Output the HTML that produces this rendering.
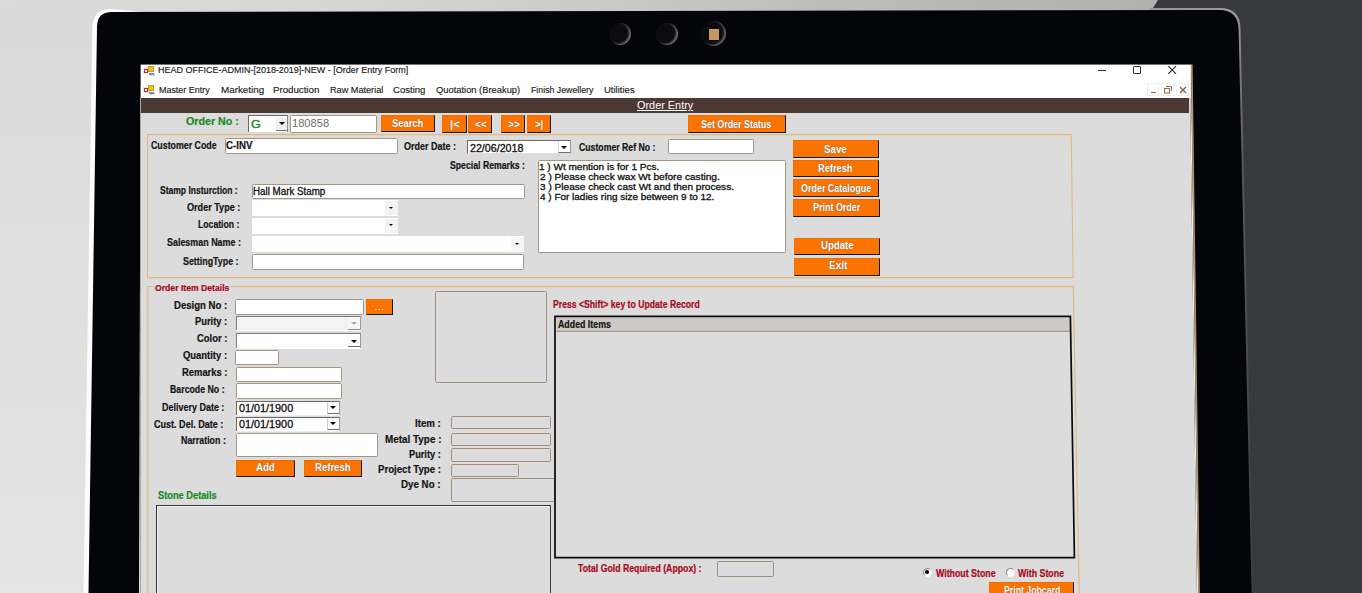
<!DOCTYPE html><html><head><meta charset="utf-8"><style>
*{margin:0;padding:0;box-sizing:border-box}
html,body{width:1362px;height:593px;overflow:hidden;background:#dcdcdc;font-family:"Liberation Sans",sans-serif}
.a{position:absolute}
.t{position:absolute;white-space:nowrap;line-height:1;transform-origin:0 0}

</style></head><body>
<svg class="a" style="left:0;top:0" width="1362" height="593">
 <defs><linearGradient id="bg" x1="0" y1="0" x2="0" y2="1"><stop offset="0" stop-color="#dadada"/><stop offset="1" stop-color="#e4e4e4"/></linearGradient></defs>
 <rect x="0" y="0" width="1362" height="593" fill="url(#bg)"/>
 <linearGradient id="tg" x1="0" y1="0" x2="1" y2="0"><stop offset="0" stop-color="#dbdbdb"/><stop offset="0.26" stop-color="#d7d7d5"/><stop offset="0.52" stop-color="#cacac6"/><stop offset="0.7" stop-color="#bebdb9"/><stop offset="1" stop-color="#b2b0ac"/></linearGradient>
 <rect x="0" y="0" width="1160" height="14" fill="url(#tg)"/>
 <path d="M1158 0 H1362 V593 H1150 V8 H1153 Z" fill="#38393c"/>
 <path d="M83.5 593 L92.3 28 Q92.5 8.6 112 9 L145 12.2 L112 12.5 Q97.5 12.5 97.3 27 L89 593 Z" fill="#fcfcfc"/>
 <linearGradient id="rg" x1="0" y1="0" x2="0" y2="1"><stop offset="0" stop-color="#9a9898"/><stop offset="0.25" stop-color="#5a5a5a"/><stop offset="1" stop-color="#3b3c3f"/></linearGradient>
 <path d="M1150 8 L1220 8 Q1240.5 8 1240.5 29 L1253.4 593 L1244 593 Z" fill="url(#rg)"/>
 <path d="M88.5 593 L97 27 Q97 12 112 12 L1218.6 10 Q1238.6 10 1238.6 30 L1251.6 593 Z" fill="#04040b"/>
 <path d="M140.6 64.5 L1189.7 64.5 L1196.9 593 L139 593 Z" fill="#dcdcdc"/>
</svg>

<div class="a" style="left:608.5px;top:22.8px;width:22px;height:22px;border-radius:50%;background:#0b0b10;box-shadow:inset -2px -1px 2px rgba(210,210,210,.5)"></div>
<div class="a" style="left:656px;top:22.5px;width:22px;height:22px;border-radius:50%;background:#0b0b10;box-shadow:inset -2px -1px 2px rgba(210,210,210,.5)"></div>
<div class="a" style="left:700.6px;top:20.9px;width:25px;height:25px;border-radius:50%;background:#0b0b10;box-shadow:inset -2px -1px 2px rgba(210,210,210,.45)"></div>
<div class="a" style="left:708.5px;top:28.9px;width:10px;height:11px;background:#c29a5e"></div>

<div class="a" style="left:140.60px;top:64.50px;width:1050.10px;height:33.50px;background:#fff"></div>
<div class="a" style="left:140.60px;top:98.00px;width:1048.60px;height:14.70px;background:#4b3933"></div>
<div class="a" style="left:139.80px;top:98.00px;width:1.40px;height:502.00px;background:#a8a8a8"></div>
<div class="a" style="left:143.5px;top:65.5px;width:11px;height:10px"><div class="a" style="left:0;top:3px;width:4.5px;height:4.5px;background:#fff;border:1px solid #b83030;box-shadow:0 0 0 1px #e8e8e8"></div><div class="a" style="left:4.5px;top:0;width:6px;height:6px;background:#f0c020;border:1px solid #d0a010"></div><div class="a" style="left:5px;top:6.5px;width:5px;height:3px;background:#fff;border-bottom:2px solid #6a90d0;box-shadow:1px 1px 0 #ddd"></div></div>
<div class="a" style="left:143.5px;top:84.5px;width:11px;height:10px"><div class="a" style="left:0;top:3px;width:4.5px;height:4.5px;background:#fff;border:1px solid #b83030;box-shadow:0 0 0 1px #e8e8e8"></div><div class="a" style="left:4.5px;top:0;width:6px;height:6px;background:#f0c020;border:1px solid #d0a010"></div><div class="a" style="left:5px;top:6.5px;width:5px;height:3px;background:#fff;border-bottom:2px solid #6a90d0;box-shadow:1px 1px 0 #ddd"></div></div>
<div class="a" style="left:1098.00px;top:69.50px;width:7.50px;height:1.10px;background:#333"></div>
<div class="a" style="left:1133.00px;top:66.20px;width:7.80px;height:7.60px;border:1px solid #333;border-radius:1px"></div>
<svg class="a" style="left:1166px;top:64px" width="12" height="12"><path d="M2.3 2.2 L10 9.8 M10 2.2 L2.3 9.8" stroke="#222" stroke-width="1.1" fill="none"/></svg>
<div class="a" style="left:1146.70px;top:82.80px;width:12.70px;height:13.50px;border:1px solid #f0f0f0"></div>
<div class="a" style="left:1161.30px;top:82.80px;width:12.70px;height:13.50px;border:1px solid #f0f0f0"></div>
<div class="a" style="left:1176.00px;top:82.80px;width:12.70px;height:13.50px;border:1px solid #f0f0f0"></div>
<div class="a" style="left:1150.50px;top:91.50px;width:5.00px;height:1.10px;background:#8a6a4a"></div>
<svg class="a" style="left:1163px;top:85px" width="10" height="10"><path d="M3 1.5 H8.5 V6" stroke="#8a6a4a" stroke-width="1" fill="none"/><rect x="1.5" y="3.5" width="5" height="4.5" stroke="#8a6a4a" stroke-width="1" fill="none"/></svg>
<svg class="a" style="left:1178px;top:85px" width="10" height="10"><path d="M2 2 L8 8 M8 2 L2 8" stroke="#7a5a3a" stroke-width="1.3" fill="none"/></svg>
<div class="a" style="left:247.90px;top:115.20px;width:39.90px;height:17.20px;background:#fff;border-top:1px solid #6a6a6a;border-left:1px solid #6a6a6a;border-right:1px solid #8a8a8a"></div>
<div class="a" style="left:275.50px;top:118.00px;width:11.70px;height:13.40px;background:#f0f0f0;border-bottom:1.3px solid #707070"></div>
<div class="a" style="left:278.50px;top:122.10px;width:0;height:0;border-left:3.00px solid transparent;border-right:3.00px solid transparent;border-top:3.20px solid #000"></div>
<div class="a" style="left:290.30px;top:114.50px;width:86.40px;height:18.40px;background:#fff;border:1px solid #a39584;border-radius:1.5px"></div>
<div class="a" style="left:380.80px;top:115.30px;width:54.00px;height:16.80px;background:#fb7300;border-right:1.6px solid #0e1a24;border-bottom:1.6px solid #0e1a24;border-left:1px solid #f27000;border-top:1px solid #ec6c00"></div>
<div class="a" style="left:442.20px;top:115.00px;width:24.60px;height:17.70px;background:#fb7300;border-right:1.6px solid #0e1a24;border-bottom:1.6px solid #0e1a24;border-left:1px solid #f27000;border-top:1px solid #ec6c00"></div>
<div class="a" style="left:467.70px;top:115.00px;width:24.70px;height:17.70px;background:#fb7300;border-right:1.6px solid #0e1a24;border-bottom:1.6px solid #0e1a24;border-left:1px solid #f27000;border-top:1px solid #ec6c00"></div>
<div class="a" style="left:501.20px;top:115.00px;width:24.30px;height:17.70px;background:#fb7300;border-right:1.6px solid #0e1a24;border-bottom:1.6px solid #0e1a24;border-left:1px solid #f27000;border-top:1px solid #ec6c00"></div>
<div class="a" style="left:526.70px;top:115.00px;width:24.30px;height:17.70px;background:#fb7300;border-right:1.6px solid #0e1a24;border-bottom:1.6px solid #0e1a24;border-left:1px solid #f27000;border-top:1px solid #ec6c00"></div>
<div class="a" style="left:687.50px;top:115.00px;width:98.20px;height:17.70px;background:#fb7300;border-right:1.6px solid #0e1a24;border-bottom:1.6px solid #0e1a24;border-left:1px solid #f27000;border-top:1px solid #ec6c00"></div>
<div class="a" style="left:225.00px;top:137.50px;width:173.00px;height:16.00px;background:#fff;border:1px solid #a39584;border-radius:1.5px"></div>
<div class="a" style="left:467.30px;top:139.70px;width:103.50px;height:14.10px;background:#fff;border-top:1px solid #6a6a6a;border-left:1px solid #6a6a6a;border-right:1px solid #9a9a9a;border-bottom:1px solid #e0e0e0"></div>
<div class="a" style="left:558.00px;top:140.60px;width:12.00px;height:12.00px;background:#fff;border-left:1px solid #d8d8d8;border-bottom:1.3px solid #707070"></div>
<div class="a" style="left:560.50px;top:145.70px;width:0;height:0;border-left:3.00px solid transparent;border-right:3.00px solid transparent;border-top:3.00px solid #000"></div>
<div class="a" style="left:668.00px;top:139.30px;width:86.40px;height:15.20px;background:#fff;border:1px solid #a39584;border-radius:1.5px"></div>
<div class="a" style="left:792.60px;top:140.10px;width:86.20px;height:17.80px;background:#fb7300;border-right:1.6px solid #0e1a24;border-bottom:1.6px solid #0e1a24;border-left:1px solid #f27000;border-top:1px solid #ec6c00"></div>
<div class="a" style="left:792.60px;top:159.80px;width:86.20px;height:17.70px;background:#fb7300;border-right:1.6px solid #0e1a24;border-bottom:1.6px solid #0e1a24;border-left:1px solid #f27000;border-top:1px solid #ec6c00"></div>
<div class="a" style="left:792.60px;top:179.30px;width:86.20px;height:18.20px;background:#fb7300;border-right:1.6px solid #0e1a24;border-bottom:1.6px solid #0e1a24;border-left:1px solid #f27000;border-top:1px solid #ec6c00"></div>
<div class="a" style="left:793.30px;top:199.00px;width:86.70px;height:17.70px;background:#fb7300;border-right:1.6px solid #0e1a24;border-bottom:1.6px solid #0e1a24;border-left:1px solid #f27000;border-top:1px solid #ec6c00"></div>
<div class="a" style="left:793.90px;top:237.50px;width:86.30px;height:17.70px;background:#fb7300;border-right:1.6px solid #0e1a24;border-bottom:1.6px solid #0e1a24;border-left:1px solid #f27000;border-top:1px solid #ec6c00"></div>
<div class="a" style="left:793.90px;top:257.80px;width:86.30px;height:17.80px;background:#fb7300;border-right:1.6px solid #0e1a24;border-bottom:1.6px solid #0e1a24;border-left:1px solid #f27000;border-top:1px solid #ec6c00"></div>
<div class="a" style="left:537.50px;top:159.50px;width:248.80px;height:93.80px;background:#fff;border:1px solid #a39584;border-radius:1.5px"></div>
<div class="a" style="left:251.70px;top:184.00px;width:272.90px;height:15.40px;background:#fff;border:1px solid #a39584;border-radius:1.5px"></div>
<div class="a" style="left:251.70px;top:200.30px;width:146.20px;height:16.20px;background:#fff"></div>
<div class="a" style="left:384.70px;top:201.30px;width:13.20px;height:14.20px;background:#f3f3f3"></div>
<div class="a" style="left:388.70px;top:206.80px;width:0;height:0;border-left:2.30px solid transparent;border-right:2.30px solid transparent;border-top:2.80px solid #000"></div>
<div class="a" style="left:251.70px;top:218.20px;width:146.20px;height:16.20px;background:#fff"></div>
<div class="a" style="left:384.70px;top:219.20px;width:13.20px;height:14.20px;background:#f3f3f3"></div>
<div class="a" style="left:388.70px;top:224.40px;width:0;height:0;border-left:2.30px solid transparent;border-right:2.30px solid transparent;border-top:2.80px solid #000"></div>
<div class="a" style="left:251.70px;top:236.30px;width:272.80px;height:16.00px;background:#fff"></div>
<div class="a" style="left:511.20px;top:237.30px;width:13.30px;height:14.00px;background:#f6f6f6"></div>
<div class="a" style="left:515.40px;top:242.60px;width:0;height:0;border-left:2.30px solid transparent;border-right:2.30px solid transparent;border-top:2.80px solid #000"></div>
<div class="a" style="left:251.70px;top:254.40px;width:272.80px;height:16.00px;background:#fff;border:1px solid #a39584;border-radius:1.5px"></div>
<div class="a" style="left:235.40px;top:299.40px;width:128.20px;height:15.30px;background:#fff;border:1px solid #a39584;border-radius:1.5px"></div>
<div class="a" style="left:365.70px;top:299.40px;width:27.20px;height:15.30px;background:#fb7300;border-right:1.6px solid #0e1a24;border-bottom:1.6px solid #0e1a24;border-left:1px solid #f27000;border-top:1px solid #ec6c00"></div>
<div class="a" style="left:375px;top:308.8px;width:9px;height:1.4px;background-image:linear-gradient(90deg,#dde 0 1.6px,transparent 1.6px 3.4px);background-size:3.4px 1.4px"></div>
<div class="a" style="left:434.70px;top:291.30px;width:112.60px;height:92.10px;border:1px solid #a09080;border-radius:1.5px"></div>
<div class="a" style="left:236.40px;top:316.30px;width:124.60px;height:14.20px;background:#f3f3f3;border-top:1px solid #7a7a7a;border-left:1px solid #7a7a7a;border-right:1px solid #9a9a9a;box-shadow:0 1px 0 #fff"></div>
<div class="a" style="left:348.10px;top:317.30px;width:12.20px;height:12.70px;background:#f6f6f6;border-bottom:1.3px solid #8a8a8a"></div>
<div class="a" style="left:351.20px;top:322.30px;width:0;height:0;border-left:3.00px solid transparent;border-right:3.00px solid transparent;border-top:3.00px solid #aaa"></div>
<div class="a" style="left:236.40px;top:333.20px;width:124.60px;height:14.40px;background:#fff;border-top:1px solid #7a7a7a;border-left:1px solid #7a7a7a;border-right:1px solid #9a9a9a;box-shadow:0 1px 0 #fff"></div>
<div class="a" style="left:348.10px;top:334.60px;width:12.20px;height:12.60px;background:#fff;border-bottom:1.3px solid #707070"></div>
<div class="a" style="left:351.20px;top:339.70px;width:0;height:0;border-left:3.00px solid transparent;border-right:3.00px solid transparent;border-top:3.20px solid #000"></div>
<div class="a" style="left:235.40px;top:350.30px;width:43.90px;height:15.20px;background:#fff;border:1px solid #a39584;border-radius:1.5px"></div>
<div class="a" style="left:235.70px;top:366.50px;width:106.10px;height:15.70px;background:#fff;border:1px solid #a39584;border-radius:1.5px"></div>
<div class="a" style="left:235.70px;top:383.30px;width:106.10px;height:15.50px;background:#fff;border:1px solid #a39584;border-radius:1.5px"></div>
<div class="a" style="left:236.10px;top:400.50px;width:104.20px;height:14.10px;background:#fff;border-top:1px solid #6a6a6a;border-left:1px solid #6a6a6a;border-right:1px solid #9a9a9a;box-shadow:0 1px 0 #eee"></div>
<div class="a" style="left:327.20px;top:401.50px;width:12.30px;height:12.60px;background:#fff;border-left:1px solid #d0d0d0;border-bottom:1.3px solid #707070"></div>
<div class="a" style="left:330.30px;top:405.95px;width:0;height:0;border-left:3.00px solid transparent;border-right:3.00px solid transparent;border-top:3.20px solid #000"></div>
<div class="a" style="left:236.10px;top:416.70px;width:104.20px;height:14.10px;background:#fff;border-top:1px solid #6a6a6a;border-left:1px solid #6a6a6a;border-right:1px solid #9a9a9a;box-shadow:0 1px 0 #eee"></div>
<div class="a" style="left:327.20px;top:417.70px;width:12.30px;height:12.60px;background:#fff;border-left:1px solid #d0d0d0;border-bottom:1.3px solid #707070"></div>
<div class="a" style="left:330.30px;top:422.15px;width:0;height:0;border-left:3.00px solid transparent;border-right:3.00px solid transparent;border-top:3.20px solid #000"></div>
<div class="a" style="left:235.70px;top:433.30px;width:142.10px;height:23.40px;background:#fff;border:1px solid #a39584;border-radius:1.5px"></div>
<div class="a" style="left:236.10px;top:460.20px;width:58.70px;height:17.20px;background:#fb7300;border-right:1.6px solid #0e1a24;border-bottom:1.6px solid #0e1a24;border-left:1px solid #f27000;border-top:1px solid #ec6c00"></div>
<div class="a" style="left:303.90px;top:460.20px;width:58.10px;height:17.20px;background:#fb7300;border-right:1.6px solid #0e1a24;border-bottom:1.6px solid #0e1a24;border-left:1px solid #f27000;border-top:1px solid #ec6c00"></div>
<div class="a" style="left:155.50px;top:505.10px;width:395.70px;height:114.90px;border-top:1px solid #333;border-left:1px solid #333;border-right:1px solid #3a3a3a;box-shadow:inset 1px 1px 0 #f4f4f4"></div>
<div class="a" style="left:450.50px;top:415.90px;width:100.30px;height:13.60px;background:#dcdcdc;border:1px solid #a08f7c;border-radius:1.5px"></div>
<div class="a" style="left:450.50px;top:432.50px;width:100.30px;height:13.20px;background:#dcdcdc;border:1px solid #a08f7c;border-radius:1.5px"></div>
<div class="a" style="left:450.50px;top:448.10px;width:100.30px;height:13.60px;background:#dcdcdc;border:1px solid #a08f7c;border-radius:1.5px"></div>
<div class="a" style="left:450.50px;top:463.80px;width:68.50px;height:13.60px;background:#dcdcdc;border:1px solid #a08f7c;border-radius:1.5px"></div>
<div class="a" style="left:450.50px;top:477.90px;width:104.10px;height:24.60px;background:#dcdcdc;border:1px solid #a08f7c;border-radius:1.5px"></div>
<div class="a" style="left:717.30px;top:560.50px;width:56.30px;height:16.20px;background:#dcdcdc;border:1px solid #a08f7c;border-radius:1.5px"></div>
<div class="a" style="left:922.5px;top:567.5px;width:9px;height:9px;border-radius:50%;background:#fafafa;border:1px solid;border-color:#8a8a8a #f0f0f0 #f8f8f8 #8a8a8a"></div>
<div class="a" style="left:925.3px;top:570.3px;width:3.4px;height:3.4px;border-radius:50%;background:#111"></div>
<div class="a" style="left:1005.5px;top:567.5px;width:9px;height:9px;border-radius:50%;background:#fafafa;border:1px solid;border-color:#8a8a8a #f0f0f0 #f8f8f8 #8a8a8a"></div>
<div class="a" style="left:989.00px;top:582.20px;width:85.00px;height:22.80px;background:#fb7300;border-right:1.6px solid #0e1a24;border-bottom:1.6px solid #0e1a24;border-left:1px solid #f27000;border-top:1px solid #ec6c00"></div>
<svg class="a" style="left:0;top:0" width="1362" height="593">
 <path d="M153.6 286.6 H147.8 V600" stroke="#e2b87c" stroke-width="1.1" fill="none"/>
 <path d="M230.7 286.6 H1073.3 L1079.4 600" stroke="#e2b87c" stroke-width="1.1" fill="none"/>
 <path d="M147.6 134.6 H1071.2 L1073.2 277.6 H147.6 Z" stroke="#e2b87c" stroke-width="1.1" fill="none"/>
 <path d="M556.5 317.5 L1069.7 317.5 L1070 330.9 L556.5 330.9 Z" fill="#cdc9c4"/>
 <path d="M556.5 331.3 L1070 331.3" stroke="#9a8c7c" stroke-width="1"/>
 <path d="M555 316.4 H1070.4 L1074.4 557.6 H555 Z" stroke="#0a0a0a" stroke-width="1.7" fill="none"/>
 <path d="M1189.7 64.5 L1191 64.5 L1198.2 593 L1196.9 593 Z" fill="#ececec"/>
 <path d="M1191 64.5 L1192.6 64.5 L1199.8 593 L1198.2 593 Z" fill="#b8946a"/>
</svg>
<div class="t" style="left:158.36px;top:64.52px;font-size:9.60px;font-weight:normal;color:#1a1a1a;transform:scaleX(0.937);-webkit-text-stroke:0.15px #1a1a1a;">HEAD OFFICE-ADMIN-[2018-2019]-NEW - [Order Entry Form]</div>
<div class="t" style="left:159.37px;top:85.07px;font-size:9.60px;font-weight:normal;color:#1a1a1a;transform:scaleX(0.931);-webkit-text-stroke:0.15px #1a1a1a;">Master Entry</div>
<div class="t" style="left:220.99px;top:85.07px;font-size:9.60px;font-weight:normal;color:#1a1a1a;transform:scaleX(1.023);-webkit-text-stroke:0.15px #1a1a1a;">Marketing</div>
<div class="t" style="left:273.41px;top:85.07px;font-size:9.60px;font-weight:normal;color:#1a1a1a;transform:scaleX(1.009);-webkit-text-stroke:0.15px #1a1a1a;">Production</div>
<div class="t" style="left:329.95px;top:85.07px;font-size:9.60px;font-weight:normal;color:#1a1a1a;transform:scaleX(0.952);-webkit-text-stroke:0.15px #1a1a1a;">Raw Material</div>
<div class="t" style="left:393.32px;top:85.07px;font-size:9.60px;font-weight:normal;color:#1a1a1a;transform:scaleX(0.995);-webkit-text-stroke:0.15px #1a1a1a;">Costing</div>
<div class="t" style="left:436.06px;top:85.07px;font-size:9.60px;font-weight:normal;color:#1a1a1a;transform:scaleX(0.974);-webkit-text-stroke:0.15px #1a1a1a;">Quotation (Breakup)</div>
<div class="t" style="left:530.78px;top:85.07px;font-size:9.60px;font-weight:normal;color:#1a1a1a;transform:scaleX(0.914);-webkit-text-stroke:0.15px #1a1a1a;">Finish Jewellery</div>
<div class="t" style="left:604.07px;top:85.07px;font-size:9.60px;font-weight:normal;color:#1a1a1a;transform:scaleX(0.991);-webkit-text-stroke:0.15px #1a1a1a;">Utilities</div>
<div class="t" style="left:636.79px;top:101.42px;font-size:10.00px;font-weight:normal;color:#ffffff;transform:scaleX(1.088);text-decoration:underline;">Order Entry</div>
<div class="t" style="left:185.76px;top:116.32px;font-size:11.20px;font-weight:bold;color:#178a1e;transform:scaleX(0.955);-webkit-text-stroke:0.2px #178a1e;">Order No :</div>
<div class="t" style="left:250.77px;top:120.27px;font-size:10.00px;font-weight:normal;color:#178a1e;transform:scaleX(1.254);-webkit-text-stroke:0.35px #178a1e;">G</div>
<div class="t" style="left:292.35px;top:118.97px;font-size:10.00px;font-weight:normal;color:#6c6c6c;transform:scaleX(1.112);">180858</div>
<div class="t" style="left:391.74px;top:119.17px;font-size:10.20px;font-weight:bold;color:#fff;transform:scaleX(0.921);text-shadow:0 0 1px #555;">Search</div>
<div class="t" style="left:449.65px;top:120.02px;font-size:10.20px;font-weight:bold;color:#fff;transform:scaleX(1.101);text-shadow:0 0 1px #555;">|&lt;</div>
<div class="t" style="left:474.57px;top:120.02px;font-size:10.20px;font-weight:bold;color:#fff;transform:scaleX(0.993);text-shadow:0 0 1px #555;">&lt;&lt;</div>
<div class="t" style="left:507.57px;top:120.02px;font-size:10.20px;font-weight:bold;color:#fff;transform:scaleX(0.993);text-shadow:0 0 1px #555;">&gt;&gt;</div>
<div class="t" style="left:534.61px;top:120.02px;font-size:10.20px;font-weight:bold;color:#fff;transform:scaleX(0.919);text-shadow:0 0 1px #555;">&gt;|</div>
<div class="t" style="left:701.25px;top:119.57px;font-size:10.20px;font-weight:bold;color:#fff;transform:scaleX(0.873);text-shadow:0 0 1px #555;">Set Order Status</div>
<div class="t" style="left:150.84px;top:140.52px;font-size:10.20px;font-weight:bold;color:#141414;transform:scaleX(0.865);-webkit-text-stroke:0.2px #141414;">Customer Code</div>
<div class="t" style="left:226.40px;top:140.72px;font-size:10.20px;font-weight:bold;color:#141414;transform:scaleX(0.953);-webkit-text-stroke:0.2px #141414;">C-INV</div>
<div class="t" style="left:404.23px;top:141.92px;font-size:10.20px;font-weight:bold;color:#141414;transform:scaleX(0.881);-webkit-text-stroke:0.2px #141414;">Order Date :</div>
<div class="t" style="left:469.87px;top:143.67px;font-size:10.00px;font-weight:normal;color:#111;transform:scaleX(1.067);-webkit-text-stroke:0.3px #111;">22/06/2018</div>
<div class="t" style="left:578.64px;top:142.72px;font-size:10.20px;font-weight:bold;color:#141414;transform:scaleX(0.854);-webkit-text-stroke:0.2px #141414;">Customer Ref No :</div>
<div class="t" style="left:824.23px;top:144.67px;font-size:10.20px;font-weight:bold;color:#fff;transform:scaleX(0.953);text-shadow:0 0 1px #555;">Save</div>
<div class="t" style="left:818.09px;top:164.02px;font-size:10.20px;font-weight:bold;color:#fff;transform:scaleX(0.908);text-shadow:0 0 1px #555;">Refresh</div>
<div class="t" style="left:801.23px;top:183.72px;font-size:10.20px;font-weight:bold;color:#fff;transform:scaleX(0.879);text-shadow:0 0 1px #555;">Order Catalogue</div>
<div class="t" style="left:813.01px;top:202.92px;font-size:10.20px;font-weight:bold;color:#fff;transform:scaleX(0.879);text-shadow:0 0 1px #555;">Print Order</div>
<div class="t" style="left:821.42px;top:241.12px;font-size:10.20px;font-weight:bold;color:#fff;transform:scaleX(0.943);text-shadow:0 0 1px #555;">Update</div>
<div class="t" style="left:828.83px;top:261.32px;font-size:10.20px;font-weight:bold;color:#fff;transform:scaleX(0.988);text-shadow:0 0 1px #555;">Exit</div>
<div class="t" style="left:450.36px;top:160.92px;font-size:10.20px;font-weight:bold;color:#141414;transform:scaleX(0.854);-webkit-text-stroke:0.2px #141414;">Special Remarks :</div>
<div class="t" style="left:539.44px;top:162.97px;font-size:9.30px;font-weight:normal;color:#111;transform:scaleX(1.078);-webkit-text-stroke:0.3px #111;">1 ) Wt mention is for 1 Pcs.</div>
<div class="t" style="left:539.69px;top:173.27px;font-size:9.30px;font-weight:normal;color:#111;transform:scaleX(1.087);-webkit-text-stroke:0.3px #111;">2 ) Please check wax Wt before casting.</div>
<div class="t" style="left:539.82px;top:183.47px;font-size:9.30px;font-weight:normal;color:#111;transform:scaleX(1.085);-webkit-text-stroke:0.3px #111;">3 ) Please check cast Wt and then process.</div>
<div class="t" style="left:539.98px;top:193.47px;font-size:9.30px;font-weight:normal;color:#111;transform:scaleX(1.071);-webkit-text-stroke:0.3px #111;">4 ) For ladies ring size between 9 to 12.</div>
<div class="t" style="left:159.66px;top:185.92px;font-size:10.20px;font-weight:bold;color:#141414;transform:scaleX(0.836);-webkit-text-stroke:0.2px #141414;">Stamp Insturction :</div>
<div class="t" style="left:253.10px;top:186.52px;font-size:10.00px;font-weight:normal;color:#111;transform:scaleX(0.978);-webkit-text-stroke:0.3px #111;">Hall Mark Stamp</div>
<div class="t" style="left:187.23px;top:202.62px;font-size:10.20px;font-weight:bold;color:#141414;transform:scaleX(0.891);-webkit-text-stroke:0.2px #141414;">Order Type :</div>
<div class="t" style="left:198.33px;top:220.42px;font-size:10.20px;font-weight:bold;color:#141414;transform:scaleX(0.850);-webkit-text-stroke:0.2px #141414;">Location :</div>
<div class="t" style="left:166.55px;top:238.27px;font-size:10.20px;font-weight:bold;color:#141414;transform:scaleX(0.876);-webkit-text-stroke:0.2px #141414;">Salesman Name :</div>
<div class="t" style="left:183.35px;top:256.67px;font-size:10.20px;font-weight:bold;color:#141414;transform:scaleX(0.871);-webkit-text-stroke:0.2px #141414;">SettingType :</div>
<div class="t" style="left:155.15px;top:284.02px;font-size:9.20px;font-weight:bold;color:#a80820;transform:scaleX(0.940);-webkit-text-stroke:0.2px #a80820;">Order Item Details</div>
<div class="t" style="left:174.37px;top:300.57px;font-size:10.20px;font-weight:bold;color:#141414;transform:scaleX(0.940);-webkit-text-stroke:0.2px #141414;">Design No :</div>
<div class="t" style="left:195.08px;top:316.97px;font-size:10.20px;font-weight:bold;color:#141414;transform:scaleX(0.917);-webkit-text-stroke:0.2px #141414;">Purity :</div>
<div class="t" style="left:196.91px;top:334.32px;font-size:10.20px;font-weight:bold;color:#141414;transform:scaleX(0.925);-webkit-text-stroke:0.2px #141414;">Color :</div>
<div class="t" style="left:183.21px;top:351.27px;font-size:10.20px;font-weight:bold;color:#141414;transform:scaleX(0.926);-webkit-text-stroke:0.2px #141414;">Quantity :</div>
<div class="t" style="left:181.78px;top:368.02px;font-size:10.20px;font-weight:bold;color:#141414;transform:scaleX(0.923);-webkit-text-stroke:0.2px #141414;">Remarks :</div>
<div class="t" style="left:169.92px;top:384.87px;font-size:10.20px;font-weight:bold;color:#141414;transform:scaleX(0.861);-webkit-text-stroke:0.2px #141414;">Barcode No :</div>
<div class="t" style="left:161.61px;top:403.12px;font-size:10.20px;font-weight:bold;color:#141414;transform:scaleX(0.881);-webkit-text-stroke:0.2px #141414;">Delivery Date :</div>
<div class="t" style="left:238.68px;top:404.02px;font-size:10.00px;font-weight:normal;color:#111;transform:scaleX(1.082);-webkit-text-stroke:0.3px #111;">01/01/1900</div>
<div class="t" style="left:238.68px;top:420.22px;font-size:10.00px;font-weight:normal;color:#111;transform:scaleX(1.082);-webkit-text-stroke:0.3px #111;">01/01/1900</div>
<div class="t" style="left:154.03px;top:419.67px;font-size:10.20px;font-weight:bold;color:#141414;transform:scaleX(0.887);-webkit-text-stroke:0.2px #141414;">Cust. Del. Date :</div>
<div class="t" style="left:181.41px;top:435.72px;font-size:10.20px;font-weight:bold;color:#141414;transform:scaleX(0.871);-webkit-text-stroke:0.2px #141414;">Narration :</div>
<div class="t" style="left:256.07px;top:463.32px;font-size:10.20px;font-weight:bold;color:#fff;transform:scaleX(0.947);text-shadow:0 0 1px #555;">Add</div>
<div class="t" style="left:314.87px;top:463.32px;font-size:10.20px;font-weight:bold;color:#fff;transform:scaleX(0.938);text-shadow:0 0 1px #555;">Refresh</div>
<div class="t" style="left:157.54px;top:491.32px;font-size:10.20px;font-weight:bold;color:#178a1e;transform:scaleX(0.909);-webkit-text-stroke:0.2px #178a1e;">Stone Details</div>
<div class="t" style="left:415.16px;top:419.22px;font-size:10.20px;font-weight:bold;color:#141414;transform:scaleX(0.951);-webkit-text-stroke:0.2px #141414;">Item :</div>
<div class="t" style="left:384.55px;top:435.12px;font-size:10.20px;font-weight:bold;color:#141414;transform:scaleX(0.971);-webkit-text-stroke:0.2px #141414;">Metal Type :</div>
<div class="t" style="left:409.09px;top:450.42px;font-size:10.20px;font-weight:bold;color:#141414;transform:scaleX(0.905);-webkit-text-stroke:0.2px #141414;">Purity :</div>
<div class="t" style="left:377.96px;top:464.87px;font-size:10.20px;font-weight:bold;color:#141414;transform:scaleX(0.944);-webkit-text-stroke:0.2px #141414;">Project Type :</div>
<div class="t" style="left:401.36px;top:479.77px;font-size:10.20px;font-weight:bold;color:#141414;transform:scaleX(0.957);-webkit-text-stroke:0.2px #141414;">Dye No :</div>
<div class="t" style="left:552.73px;top:299.72px;font-size:10.20px;font-weight:bold;color:#a80820;transform:scaleX(0.850);-webkit-text-stroke:0.2px #a80820;">Press &lt;Shift&gt; key to Update Record</div>
<div class="t" style="left:558.39px;top:320.27px;font-size:10.20px;font-weight:bold;color:#141414;transform:scaleX(0.865);-webkit-text-stroke:0.2px #141414;">Added Items</div>
<div class="t" style="left:578.00px;top:563.87px;font-size:10.20px;font-weight:bold;color:#a80820;transform:scaleX(0.857);-webkit-text-stroke:0.2px #a80820;">Total Gold Required (Appox) :</div>
<div class="t" style="left:935.59px;top:568.72px;font-size:10.20px;font-weight:bold;color:#a80820;transform:scaleX(0.864);-webkit-text-stroke:0.2px #a80820;">Without Stone</div>
<div class="t" style="left:1018.39px;top:568.72px;font-size:10.20px;font-weight:bold;color:#a80820;transform:scaleX(0.867);-webkit-text-stroke:0.2px #a80820;">With Stone</div>
<div class="t" style="left:1003.72px;top:585.87px;font-size:10.20px;font-weight:bold;color:#fff;transform:scaleX(0.857);text-shadow:0 0 1px #555;">Print Jobcard</div>
</body></html>
